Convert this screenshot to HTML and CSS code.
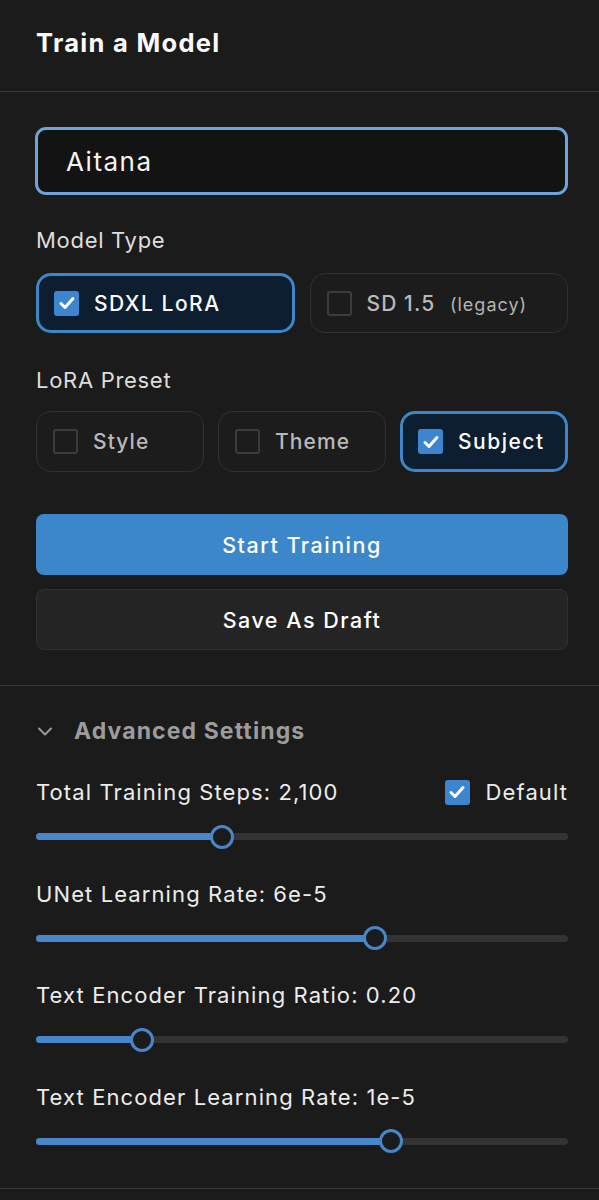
FILE: index.html
```html
<!DOCTYPE html>
<html>
<head>
<meta charset="utf-8">
<link rel="stylesheet" href="styles.css">
</head>
<body>
<div class="panel">
  <header class="header"><h1 class="title">Train a Model</h1></header>

  <section class="main">
    <div class="name-input">Aitana</div>

    <div class="label label-type">Model Type</div>
    <div class="opts two">
      <div class="opt selected">
        <span class="cb on"><svg viewBox="0 0 24 24" width="24" height="24"><path d="M6 12.5l4 4 8-9" fill="none" stroke="#fff" stroke-width="3" stroke-linecap="round" stroke-linejoin="round"/></svg></span>
        <span class="opt-text strong">SDXL LoRA</span>
      </div>
      <div class="opt">
        <span class="cb"></span>
        <span class="opt-text">SD 1.5 <small class="legacy">(legacy)</small></span>
      </div>
    </div>

    <div class="label label-preset">LoRA Preset</div>
    <div class="opts three">
      <div class="opt">
        <span class="cb"></span>
        <span class="opt-text">Style</span>
      </div>
      <div class="opt">
        <span class="cb"></span>
        <span class="opt-text">Theme</span>
      </div>
      <div class="opt selected">
        <span class="cb on"><svg viewBox="0 0 24 24" width="24" height="24"><path d="M6 12.5l4 4 8-9" fill="none" stroke="#fff" stroke-width="3" stroke-linecap="round" stroke-linejoin="round"/></svg></span>
        <span class="opt-text strong">Subject</span>
      </div>
    </div>

    <button class="btn primary">Start Training</button>
    <button class="btn secondary">Save As Draft</button>
  </section>

  <section class="advanced">
    <div class="adv-head">
      <svg class="chev" viewBox="0 0 18 18" width="18" height="18"><path d="M3 6.5l6 6 6-6" fill="none" stroke="#9a9a9a" stroke-width="2" stroke-linecap="round" stroke-linejoin="round"/></svg>
      <span class="adv-title">Advanced Settings</span>
    </div>

    <div class="setting">
      <div class="setting-row">
        <span class="setting-label">Total Training Steps: 2,100</span>
        <span class="default">
          <span class="cb on"><svg viewBox="0 0 24 24" width="24" height="24"><path d="M6 12.5l4 4 8-9" fill="none" stroke="#fff" stroke-width="3" stroke-linecap="round" stroke-linejoin="round"/></svg></span>
          <span class="default-text">Default</span>
        </span>
      </div>
      <div class="slider"><div class="fill" style="width:35%"><span class="thumb"></span></div></div>
    </div>

    <div class="setting">
      <div class="setting-row"><span class="setting-label">UNet Learning Rate: 6e-5</span></div>
      <div class="slider"><div class="fill" style="width:63.7%"><span class="thumb"></span></div></div>
    </div>

    <div class="setting">
      <div class="setting-row"><span class="setting-label">Text Encoder Training Ratio: 0.20</span></div>
      <div class="slider"><div class="fill" style="width:19.9%"><span class="thumb"></span></div></div>
    </div>

    <div class="setting">
      <div class="setting-row"><span class="setting-label">Text Encoder Learning Rate: 1e-5</span></div>
      <div class="slider"><div class="fill" style="width:66.7%"><span class="thumb"></span></div></div>
    </div>
  </section>
</div>
</body>
</html>
```

FILE: styles.css
```css
* { box-sizing: border-box; }
html, body { margin: 0; padding: 0; background: #1b1b1b; }
body {
  font-family: "Inter", "Open Sans", "DejaVu Sans", sans-serif;
  color: #e8e8e8;
  width: 599px;
  height: 1200px;
  overflow: hidden;
}
.panel { display: flex; flex-direction: column; }

.header {
  height: 92px;
  border-bottom: 1px solid #383838;
  padding: 26px 36px 0;
}
.title {
  margin: 0;
  font-size: 25.5px;
  line-height: 34px;
  font-weight: 700;
  color: #fafafa;
  letter-spacing: 1.3px;
}

.main {
  padding: 35px 31px 35px 35px;
  display: flex;
  flex-direction: column;
  border-bottom: 1px solid #383838;
}
.name-input {
  height: 68px;
  border: 3px solid #6ea4db;
  border-radius: 11px;
  background: #131313;
  padding: 0 28px;
  display: flex;
  align-items: center;
  font-size: 26px;
  letter-spacing: 1.5px;
  color: #f4f4f4;
  font-weight: 400;
}
.label {
  font-size: 22px;
  letter-spacing: 0.7px;
  line-height: 30px;
  color: #dedede;
  padding-left: 1px;
}
.label-type { margin-top: 30px; }
.label-preset { margin-top: 32px; }

.opts { display: grid; padding-left: 1px; }
.opts.two { grid-template-columns: 1fr 1fr; gap: 15px; height: 60px; margin-top: 18px; }
.opts.three { grid-template-columns: 1fr 1fr 1fr; gap: 14px; height: 61px; margin-top: 16px; }

.opt {
  border: 1px solid #303030;
  border-radius: 15px;
  background: #1c1c1c;
  display: flex;
  align-items: center;
  padding-left: 16px;
  gap: 15px;
}
.opt.selected {
  border: 3px solid #3e86c8;
  background: #0c1e30;
  padding-left: 15px;
}
.cb {
  width: 25px;
  height: 25px;
  border: 2px solid #3c3c3c;
  border-radius: 3px;
  flex: none;
  display: inline-flex;
  align-items: center;
  justify-content: center;
}
.cb.on { background: #3d86cf; border: none; }
.opt-text {
  font-size: 21px;
  letter-spacing: 1.1px;
  color: #b9b9b9;
  font-weight: 500;
  white-space: nowrap;
}
.opt-text.strong { color: #fbfbfb; font-weight: 500; letter-spacing: 1.5px; }
.legacy { font-size: 18px; margin-left: 8px; color: #b3b3b3; font-weight: 400; letter-spacing: 1px; }

.btn {
  font-family: inherit;
  height: 61px;
  border-radius: 8px;
  font-size: 21.5px;
  letter-spacing: 1.5px;
  font-weight: 500;
  color: #fff;
  cursor: pointer;
  margin-left: 1px;
}
.btn.primary {
  margin-top: 42px;
  background: #3b87ca;
  border: none;
}
.btn.secondary {
  margin-top: 14px;
  background: #242424;
  border: 1px solid #303030;
}

.advanced {
  padding: 29px 31px 43px 36px;
  display: flex;
  flex-direction: column;
  border-bottom: 1px solid #383838;
}
.adv-head { display: flex; align-items: center; gap: 20px; height: 32px; }
.adv-title { font-size: 23px; letter-spacing: 1.1px; font-weight: 700; color: #9c9c9c; }

.setting { display: flex; flex-direction: column; }
.adv-head + .setting { margin-top: 29px; }
.setting + .setting { margin-top: 37.5px; }
.setting-row {
  display: flex;
  justify-content: space-between;
  align-items: center;
  height: 32px;
}
.setting-label { font-size: 22px; letter-spacing: 1.1px; color: #ececec; font-weight: 400; }
.default { display: flex; align-items: center; gap: 16px; }
.default-text { font-size: 22px; letter-spacing: 1.1px; color: #ececec; }

.slider {
  margin-top: 25px;
  height: 7px;
  border-radius: 4px;
  background: #333333;
  position: relative;
}
.fill {
  height: 100%;
  background: #4886c9;
  border-radius: 4px;
  position: relative;
}
.thumb {
  position: absolute;
  right: -12px;
  top: -8.5px;
  width: 24px;
  height: 24px;
  border-radius: 50%;
  border: 3px solid #4886c9;
  background: #1b1b1b;
}
```
